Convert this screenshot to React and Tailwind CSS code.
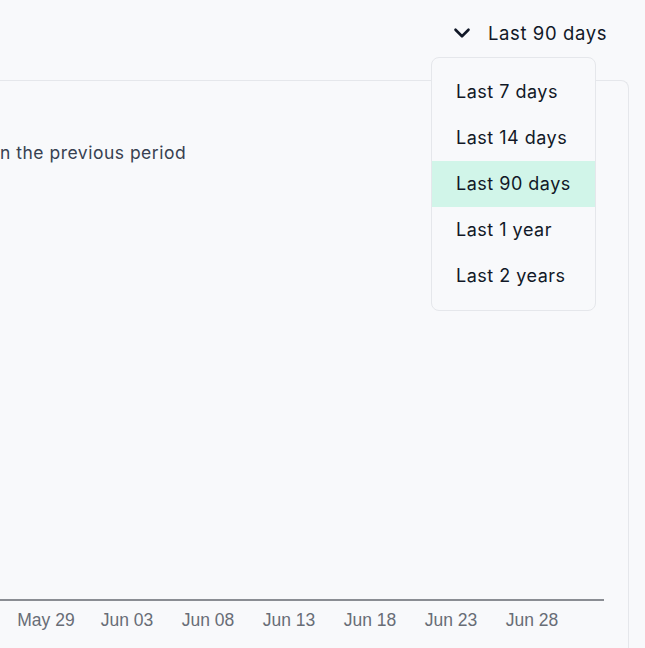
import { ChevronDown } from "lucide-react";

const options = ["Last 7 days", "Last 14 days", "Last 90 days", "Last 1 year", "Last 2 years"];
const ticks = ["May 29", "Jun 03", "Jun 08", "Jun 13", "Jun 18", "Jun 23", "Jun 28"];

export default function App() {
  const selected = "Last 90 days";

  return (
    <div
      className="relative h-[648px] w-full overflow-hidden bg-[#f8f9fb] text-[#111827]"
      style={{ fontFamily: "Inter, 'Noto Sans', sans-serif" }}
    >
      {/* header with the range picker */}
      <div className="flex h-[80px] items-start justify-end pr-[38px] pt-[20px]">
        <button className="flex items-center gap-[13px] text-[18.5px] leading-[26px] tracking-[0.6px]">
          <ChevronDown size={26} strokeWidth={2.4} className="text-[#111827]" />
          <span>{selected}</span>
        </button>
      </div>

      {/* chart card */}
      <div className="mr-[16px] h-[620px] rounded-tr-lg border-r border-t border-[#e5e7eb] bg-[#f8f9fb]">
        <p className="pt-[60px] text-[17.5px] leading-[24px] tracking-[0.5px] text-[#374151]">n the previous period</p>

        <svg width="610" height="60" className="mt-[434px] block" style={{ fontFamily: "'Liberation Sans', Arial, sans-serif" }}>
          <line x1="0" y1="1" x2="604" y2="1" stroke="#8a8d93" strokeWidth="2" />
          {ticks.map((t, i) => (
            <text key={t} x={46 + i * 81} y="27" textAnchor="middle" fontSize="17.5" fill="#686d76">
              {t}
            </text>
          ))}
        </svg>
      </div>

      {/* open dropdown */}
      <div className="absolute right-[49px] top-[57px] w-[165px] rounded-lg border border-[#e5e7eb] bg-[#f8f9fb] pb-[11px] pt-[11px]">
        {options.map((o) => (
          <div
            key={o}
            className={`flex h-[46px] items-center pb-[2px] pl-[24px] text-[18px] tracking-[0.5px] ${o === selected ? "bg-[#d1f5e9]" : ""}`}
          >
            {o}
          </div>
        ))}
      </div>
    </div>
  );
}
